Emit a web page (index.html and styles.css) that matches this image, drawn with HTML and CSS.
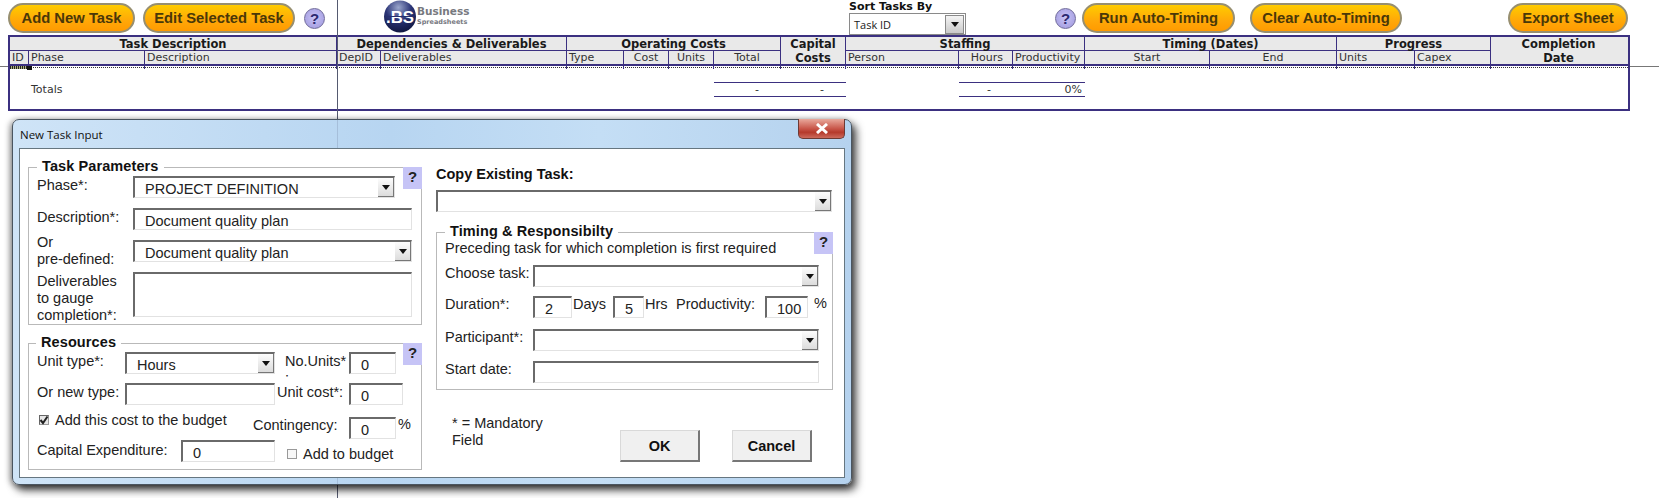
FILE: index.html
```html
<!DOCTYPE html>
<html lang="en">
<head>
<meta charset="utf-8">
<title>New Task Input</title>
<link rel="stylesheet" href="styles.css">
</head>
<body>
<div class="page">
  <header class="toolbar">
    <button class="pill w-add">Add New Task</button>
    <button class="pill w-edit">Edit Selected Task</button>
    <span class="help help-a">?</span>
    <div class="logo">
      <svg class="logo-mark" width="32" height="33" viewBox="0 0 32 33">
        <defs>
          <radialGradient id="lg" cx="45%" cy="22%" r="80%">
            <stop offset="0" stop-color="#9aa6cc"/>
            <stop offset="0.5" stop-color="#2b3476"/>
            <stop offset="1" stop-color="#10163f"/>
          </radialGradient>
        </defs>
        <circle cx="16" cy="16.5" r="16" fill="url(#lg)"/>
        <text x="2" y="23" textLength="28" lengthAdjust="spacingAndGlyphs" class="logo-bs">.BS</text>
        <rect x="2" y="16" width="28" height="1" fill="#27306f"/>
      </svg>
      <div class="logo-text">
        <div class="logo-top">Business</div>
        <div class="logo-sub">Spreadsheets</div>
      </div>
    </div>
    <div class="sort">
      <div class="sort-title">Sort Tasks By</div>
      <div class="sort-select"><span>Task ID</span><i class="sort-btn"><b class="arrow"></b></i></div>
    </div>
    <span class="help help-b">?</span>
    <button class="pill w-run">Run Auto-Timing</button>
    <button class="pill w-clear">Clear Auto-Timing</button>
    <button class="pill w-export">Export Sheet</button>
  </header>

  <div class="hline"></div>

  <section class="sheet">
    <div class="cols head">
      <div class="h1 s3">Task Description</div>
      <div class="h1 s2">Dependencies &amp; Deliverables</div>
      <div class="h1 s4">Operating Costs</div>
      <div class="h12">Capital<br>Costs</div>
      <div class="h1 s3">Staffing</div>
      <div class="h1 s2">Timing (Dates)</div>
      <div class="h1 s2">Progress</div>
      <div class="h12 last">Completion<br>Date</div>

      <div class="h2">ID</div>
      <div class="h2">Phase</div>
      <div class="h2">Description</div>
      <div class="h2">DepID</div>
      <div class="h2">Deliverables</div>
      <div class="h2">Type</div>
      <div class="h2 ctr">Cost</div>
      <div class="h2 ctr">Units</div>
      <div class="h2 ctr">Total</div>
      <div class="h2 col-person">Person</div>
      <div class="h2 rgt">Hours</div>
      <div class="h2">Productivity</div>
      <div class="h2 ctr">Start</div>
      <div class="h2 ctr">End</div>
      <div class="h2 col-units">Units</div>
      <div class="h2">Capex</div>
    </div>
    <div class="cols dots">
      <i class="sel"></i><i class="sel-end"></i><i></i><i></i><i></i><i></i><i></i><i></i><i></i><i></i><i></i><i></i><i></i><i></i><i></i><i></i><i></i><i class="none"></i>
    </div>
    <div class="cols totals">
      <div class="tot-label">Totals</div>
      <div class="tot-num col-total">-</div>
      <div class="tot-num">-</div>
      <div class="tot-num col-hours">-</div>
      <div class="tot-pct">0%</div>
    </div>
  </section>

  <div class="freeze"></div>

  <section class="dialog">
    <div class="titlebar">
      <span class="title">New Task Input</span>
      <span class="close"><svg width="14" height="11" viewBox="0 0 14 11"><path d="M2 1 L12 10 M12 1 L2 10" stroke="#fff" stroke-width="3"/></svg></span>
    </div>
    <div class="client">
      <div class="col-left">
        <div class="group g-task">
          <div class="legend">Task Parameters</div>
          <span class="qbox">?</span>
          <div class="rows">
            <div class="row">
              <div class="lbl w96">Phase*:</div>
              <div class="field select w262">PROJECT DEFINITION<i class="dd"><b class="arrow"></b></i></div>
            </div>
            <div class="row">
              <div class="lbl w96">Description*:</div>
              <div class="field w279">Document quality plan</div>
            </div>
            <div class="row">
              <div class="lbl w96 up8">Or<br>pre-defined:</div>
              <div class="field select w279">Document quality plan<i class="dd"><b class="arrow"></b></i></div>
            </div>
            <div class="row tall">
              <div class="lbl w96">Deliverables<br>to gauge<br>completion*:</div>
              <div class="field tall w279"></div>
            </div>
          </div>
        </div>

        <div class="group g-res">
          <div class="legend">Resources</div>
          <span class="qbox">?</span>
          <div class="row first">
            <div class="lbl w88">Unit type*:</div>
            <div class="field select w150">Hours<i class="dd"><b class="arrow"></b></i></div>
            <div class="lbl clip">No.Units* :</div>
            <div class="field w47">0</div>
          </div>
          <div class="row mt9">
            <div class="lbl w88">Or new type:</div>
            <div class="field w150"></div>
            <div class="lbl ucost">Unit cost*:</div>
            <div class="field w54">0</div>
          </div>
          <div class="row mt12">
            <div class="check-wrap">
              <span class="cb on"><svg width="10" height="10" viewBox="0 0 10 10"><path d="M1.5 5 L4 8 L8.5 1.5" fill="none" stroke="#222" stroke-width="2"/></svg></span>
              <span class="cb-text">Add this cost to the budget</span>
            </div>
            <div class="lbl w96 low">Contingency:</div>
            <div class="field w47">0</div>
            <div class="pct">%</div>
          </div>
          <div class="row mt1">
            <div class="lbl w144 cap">Capital Expenditure:</div>
            <div class="field w94">0</div>
            <div class="check-two">
              <span class="cb"></span>
              <span class="cb-text">Add to budget</span>
            </div>
          </div>
        </div>
      </div>

      <div class="col-right">
        <div class="copy-title">Copy Existing Task:</div>
        <div class="field select w396">&nbsp;<i class="dd"><b class="arrow"></b></i></div>
        <div class="group g-time">
          <div class="legend">Timing &amp; Responsibilty</div>
          <span class="qbox">?</span>
          <div class="lbl">Preceding task for which completion is first required</div>
          <div class="row mt8">
            <div class="lbl w88">Choose task:</div>
            <div class="field select w286">&nbsp;<i class="dd"><b class="arrow"></b></i></div>
          </div>
          <div class="row mt9">
            <div class="lbl w88">Duration*:</div>
            <div class="field w39">2</div>
            <div class="lbl w-days">Days</div>
            <div class="field w31">5</div>
            <div class="lbl w-hrs">Hrs</div>
            <div class="lbl w-prod">Productivity:</div>
            <div class="field w43">100</div>
            <div class="pct wide">%</div>
          </div>
          <div class="row mt11">
            <div class="lbl w88">Participant*:</div>
            <div class="field select w286">&nbsp;<i class="dd"><b class="arrow"></b></i></div>
          </div>
          <div class="row mt10">
            <div class="lbl w88">Start date:</div>
            <div class="field w286"></div>
          </div>
        </div>
        <div class="actions">
          <div class="note">* = Mandatory<br>Field</div>
          <button class="win-btn">OK</button>
          <button class="win-btn">Cancel</button>
        </div>
      </div>
    </div>
  </section>
</div>
</body>
</html>
```
FILE: styles.css
```css
* { box-sizing: border-box; }
html, body { margin: 0; padding: 0; background: #fff; }
.page { position: relative; width: 1659px; height: 498px; overflow: hidden; font-family: "DejaVu Sans", sans-serif; color: #1a1a1a; }

/* toolbar */
.toolbar { display: flex; align-items: flex-start; height: 35px; padding: 3px 0 0 8px; }
.pill {
  height: 30px; padding: 0; border: 2px solid #978f70; border-radius: 15px;
  background: linear-gradient(#ffcc00, #ffa808 60%, #ff9a00);
  font: bold 14.8px "Liberation Sans", sans-serif; color: #4a3808; text-align: center;
}
.w-add { width: 127px; }
.w-edit { width: 152px; margin-left: 8px; }
.w-run { width: 153px; margin-left: 6px; }
.w-clear { width: 152px; margin-left: 15px; }
.w-export { width: 120px; margin-left: 106px; }
.help {
  width: 21px; height: 21px; margin-top: 5px; border-radius: 50%; border: 1px solid #6f6a9a;
  background: radial-gradient(circle at 50% 45%, #c9c4f6, #9d96dc);
  font: bold 15px/19px "Liberation Sans", sans-serif; color: #2c2a70; text-align: center;
}
.help-a { margin-left: 9px; }
.help-b { margin-left: 89px; }
.logo { display: flex; width: 88px; margin: -3px 0 0 59px; height: 33px; }
.logo-mark { flex: none; }
.logo-bs { font: bold 17px "Liberation Sans", sans-serif; fill: #fff; }
.logo-text { margin: 5px 0 0 1px; font-family: "DejaVu Sans", sans-serif; font-weight: bold; color: #77797f; }
.logo-top { font-size: 10.5px; line-height: 13px; }
.logo-sub { font-size: 6.5px; line-height: 8px; }
.sort { width: 117px; margin: -2px 0 0 377px; }
.sort-title { height: 12px; font-size: 11px; font-weight: bold; line-height: 11px; color: #111; }
.sort-select { display: flex; justify-content: space-between; align-items: center; height: 22px; border: 1px solid #8a8a8a; padding: 0 1px 0 4px; font: 11px "Open Sans", sans-serif; background: #fff; }
.sort-btn { display: flex; align-items: center; justify-content: center; width: 19px; height: 19px; background: linear-gradient(#f4f4f4, #c9c9c9); border: 1px solid #8a8a8a; }

/* sheet */
.hline { position: absolute; left: 0; right: 0; top: 66px; height: 1px; background: #777; }
.sheet { position: relative; width: 1622px; height: 76px; margin-left: 8px; border: 2px solid #3b3080; background: #fff; font-size: 11px; }
.cols { display: grid; grid-template-columns: 19px 116px 192px 44px 186px 57px 45px 45px 67px 65px 113px 54px 72px 125px 127px 78px 76px 135px; }
.head { grid-template-rows: 14px 13px; background: #e9e9e9; border-bottom: 2px solid #3b3080; height: 29px; line-height: 14px; }
.h1 { font-size: 11.5px; font-weight: bold; text-align: center; border-right: 1px solid #3b3080; border-bottom: 1px solid #3b3080; }
.s2 { grid-column: span 2; }
.s3 { grid-column: span 3; }
.s4 { grid-column: span 4; }
.h12 { grid-row: span 2; grid-column: span 1; font-size: 11.5px; font-weight: bold; text-align: center; border-right: 1px solid #3b3080; line-height: 14px; }
.h12.last { border-right: 0; grid-column: 18; grid-row: 1 / span 2; }
.h2 { padding: 0 2px; border-right: 1px solid #3b3080; white-space: nowrap; color: #333; }
.h2.rgt { padding-right: 9px; }
.ctr { text-align: center; }
.rgt { text-align: right; }
.col-person { grid-column: 11; }
.col-units { grid-column: 16; }
.dots { height: 2px; border-bottom: 1px dotted #333; }
.dots i { border-right: 1px solid #3b3080; position: relative; }
.dots i.none { border-right: 0; }
.dots i.sel { background: repeating-linear-gradient(90deg, #222 0 1px, #a9ad7a 1px 2px); border-right: 0; height: 3px; }
.dots i.sel-end::before { content: ""; position: absolute; left: -2px; top: 0; width: 5px; height: 4px; background: #111; }
.totals { height: 41px; }
.tot-label { grid-column: 2; padding: 15px 0 0 2px; color: #333; }
.tot-num { margin-top: 14px; height: 15px; border-top: 1px solid #3b3080; border-bottom: 1px solid #3b3080; line-height: 14px; text-align: right; padding-right: 22px; color: #333; }
.col-total { grid-column: 9; }
.col-hours { grid-column: 12; }
.tot-pct { margin-top: 14px; height: 15px; border-top: 1px solid #3b3080; border-bottom: 1px solid #3b3080; line-height: 14px; text-align: right; padding-right: 3px; color: #333; }
.freeze { position: absolute; left: 337px; top: 0; width: 1px; height: 498px; background: #555a70; }

/* dialog */
.dialog {
  position: absolute; left: 12px; top: 119px; width: 840px; height: 366px; padding: 0 6px 6px;
  border-radius: 7px; border: 1px solid #4a5560;
  background: linear-gradient(90deg, #cfe4f7, #b7d5f1 45%, #c4def5 70%, #b5d2ee);
  box-shadow: 4px 5px 9px rgba(0,0,0,.75), -2px 1px 6px rgba(0,0,0,.4);
  font: 14.5px/17px "Liberation Sans", sans-serif; color: #222;
}
.dialog::before { content: ""; position: absolute; left: 324px; top: 0; bottom: 0; width: 1px; background: rgba(70,80,110,.18); }
.titlebar { display: flex; justify-content: space-between; height: 28px; }
.title { margin: 6px 0 0 1px; font: 11.5px/17px "Open Sans", sans-serif; color: #111; }
.close { display: flex; align-items: center; justify-content: center; width: 47px; height: 20px; margin-top: -1px; border: 1px solid #6d3a34; border-top: 0; border-radius: 0 0 5px 5px; background: linear-gradient(#e9a99c, #c9574a 50%, #b53a2c 70%, #cc6a5c); }
.client { position: relative; display: flex; gap: 14px; height: 330px; padding: 18px 0 0 8px; background: #fff; border: 1px solid #667680; }
.col-left { width: 394px; }
.col-right { width: 397px; }
.group { position: relative; border: 1px solid #b9b9b9; padding: 0 8px; background: #fff; }
.legend { width: max-content; margin: -10px 0 0; padding: 0 5px; background: #fff; font-weight: bold; letter-spacing: .1px; color: #111; }
.g-task { padding-bottom: 7px; }
.g-res { margin-top: 18px; padding-bottom: 7px; }
.g-res .legend { margin-left: -1px; }
.row.first { margin-top: 1px; }
.g-time { margin-top: 20px; padding-bottom: 6px; }
.qbox { position: absolute; right: -1px; top: -1px; width: 19px; height: 22px; background: #c6c4f6; font: bold 15px/20px "Liberation Sans", sans-serif; text-align: center; color: #222; }
.rows { display: flex; flex-direction: column; gap: 10px; margin-top: 1px; }
.row { display: flex; align-items: flex-start; height: 22px; }
.row.tall { height: 45px; }
.mt1 { margin-top: 1px; }
.mt8 { margin-top: 8px; }
.mt9 { margin-top: 9px; }
.mt10 { margin-top: 10px; }
.mt11 { margin-top: 11px; }
.mt12 { margin-top: 12px; }
.lbl { flex: none; white-space: nowrap; }
.col-left .lbl { margin-top: .5px; }
.col-left .lbl.up8 { margin-top: -6.5px; }
.col-left .lbl.low { margin-top: 0; }
.col-left .lbl.cap { margin-top: 2px; }
.clip { width: 64px; height: 24px; margin-left: 10px; overflow: hidden; white-space: normal; }
.ucost { width: 72px; margin-left: 2px; }
.w88 { width: 88px; }
.w96 { width: 96px; }
.w144 { width: 144px; }
.w-days { width: 40px; margin-left: 1px; }
.w-hrs { width: 31px; margin-left: 1px; }
.w-prod { width: 89px; }
.field {
  position: relative; flex: none; height: 22px; padding: 3px 0 0 10px; white-space: nowrap; line-height: 17px;
  background: #fff; border: 1px solid #e2e2e2; border-top: 2px solid #6a6a6a; border-left: 2px solid #6a6a6a;
}
.field.tall { height: 45px; }
.w31 { width: 31px; }
.w39 { width: 39px; }
.w43 { width: 43px; }
.w47 { width: 47px; }
.w54 { width: 54px; }
.w94 { width: 94px; }
.w150 { width: 150px; }
.w262 { width: 262px; }
.w279 { width: 279px; }
.w286 { width: 286px; }
.w396 { width: 396px; }
.dd { position: absolute; right: 0; top: 0; display: flex; align-items: center; justify-content: center; width: 16px; height: 19px; background: linear-gradient(#fdfdfd, #dcdcdc); border-right: 1px solid #777; border-bottom: 1px solid #777; }
.arrow { width: 0; height: 0; border-left: 4px solid transparent; border-right: 4px solid transparent; border-top: 5px solid #111; }
.pct { margin-left: 2px; margin-top: -1px; }
.pct.wide { margin-left: 6px; }
.check-wrap { display: flex; gap: 6px; width: 214px; margin: -5px 0 0 2px; }
.check-two { display: flex; gap: 6px; margin: 6px 0 0 12px; }
.cb { flex: none; width: 10px; height: 10px; margin-top: 3px; border: 1px solid #999; background: #f7f7f7; position: relative; }
.cb.on { border-top-color: #666; border-left-color: #666; background: #e6e6e6; }
.cb svg { position: absolute; left: -1px; top: -1px; }
.cb-text { white-space: nowrap; }
.copy-title { margin-top: -1px; margin-bottom: 7px; font-weight: bold; color: #111; }
.actions { display: flex; align-items: flex-start; gap: 32px; }
.note { flex: none; width: 136px; margin: 25px 0 0 16px; }
.win-btn {
  flex: none; width: 80px; height: 32px; margin-top: 40px; padding: 0; background: #f0f0f0; font: bold 14.5px "Liberation Sans", sans-serif; color: #111;
  border: 1px solid #d9d9d9; border-right: 2px solid #777; border-bottom: 2px solid #777;
}
```
